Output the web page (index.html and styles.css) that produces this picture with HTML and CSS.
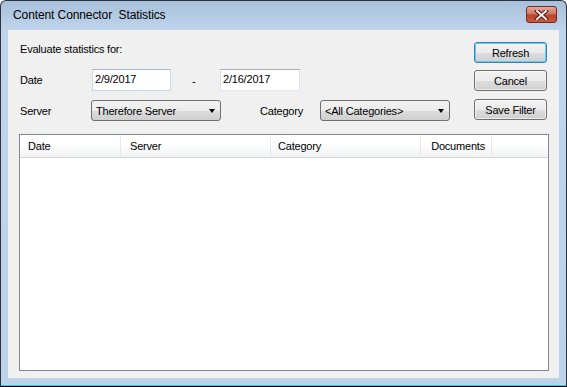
FILE: index.html
```html
<!DOCTYPE html>
<html lang="en">
<head>
    <meta charset="UTF-8">
    <title>Content Connector Statistics</title>
    <link rel="stylesheet" href="styles.css">
</head>
<body>
    <div class="window">
        <!-- Title Bar -->
        <div class="title-bar">
            <span class="title">Content Connector&nbsp; Statistics</span>
            <div class="close-btn">
                <svg width="15" height="10" viewBox="0 0 15 10">
                    <path d="M3 1 L12 9 M12 1 L3 9" stroke="#5a1a14" stroke-width="4" stroke-linecap="square"/>
                    <path d="M3 1 L12 9 M12 1 L3 9" stroke="#f4f4f4" stroke-width="2" stroke-linecap="square"/>
                </svg>
            </div>
        </div>

        <!-- Client Area -->
        <div class="client">
            <div class="top">
                <div class="filters">
                    <div class="row intro">Evaluate statistics for:</div>
                    <div class="row date-row">
                        <span class="label date-label">Date</span>
                        <div class="textbox hot">2/9/2017</div>
                        <span class="dash">-</span>
                        <div class="textbox wide">2/16/2017</div>
                    </div>
                    <div class="row server-row">
                        <span class="label server-label">Server</span>
                        <div class="combo">Therefore Server<span class="arrow"></span></div>
                        <span class="label category-label">Category</span>
                        <div class="combo">&lt;All Categories&gt;<span class="arrow"></span></div>
                    </div>
                </div>
                <div class="actions">
                    <div class="button default">Refresh</div>
                    <div class="button">Cancel</div>
                    <div class="button save">Save Filter</div>
                </div>
            </div>

            <!-- List View -->
            <div class="list">
                <div class="list-header">
                    <div class="col col-date">Date</div>
                    <div class="col col-server">Server</div>
                    <div class="col col-category">Category</div>
                    <div class="col col-docs">Documents</div>
                    <div class="col col-fill"></div>
                </div>
            </div>
        </div>
    </div>
</body>
</html>
```

FILE: styles.css
```css
body {
    margin: 0;
    padding: 0;
    font-family: "Liberation Sans", Arial, sans-serif;
    font-size: 11px;
    color: #000;
    background-color: #fff;
}
.window {
    width: 567px;
    height: 387px;
    box-sizing: border-box;
    border: 1px solid #2b3440;
    border-bottom-color: #000;
    border-radius: 6px 6px 0 0;
    background: linear-gradient(#a8c0da 0, #bfd5ec 30px, #bcd3ea 100%);
    box-shadow: inset 0 -1px 0 #3fc6e8;
    padding: 0 7px 8px 7px;
    display: flex;
    flex-direction: column;
    overflow: hidden;
}
.title-bar {
    height: 29px;
    display: flex;
    align-items: center;
    justify-content: space-between;
}
.title {
    font-size: 12px;
    letter-spacing: -0.1px;
    padding-left: 5px;
    padding-bottom: 2px;
    color: #000;
}
.close-btn {
    width: 29px;
    height: 15px;
    margin-right: 2px;
    margin-top: -2px;
    border: 1px solid #6c2a22;
    border-radius: 3px;
    background: linear-gradient(#e7a99c 0%, #d0745f 45%, #b8432c 55%, #c95a3f 100%);
    display: flex;
    justify-content: center;
    align-items: center;
}
.client {
    flex: 1;
    background-color: #f0f0f0;
    padding: 12px 10px 7px 11px;
    display: flex;
    flex-direction: column;
    letter-spacing: -0.2px;
}
.top {
    display: flex;
    padding: 0 2px 0 1px;
}
.filters {
    flex: 1;
}
.row {
    display: flex;
    align-items: center;
}
.intro {
    height: 13px;
}
.date-row {
    margin-top: 14px;
    height: 22px;
}
.server-row {
    margin-top: 9px;
    height: 21px;
}
.label {
    display: block;
}
.date-label {
    width: 72px;
}
.server-label {
    width: 71px;
}
.category-label {
    width: 60px;
    margin-left: 39px;
}
.textbox {
    width: 79px;
    height: 22px;
    box-sizing: border-box;
    background-color: #fff;
    border: 1px solid;
    border-color: #abadb3 #e2e3ea #e3e9ef #dbdfe6;
    padding: 3px 0 0 2px;
}
.textbox.hot {
    border-color: #a3b7cc #c5d9ec #c5d9ec #c5d9ec;
}
.textbox.wide {
    width: 80px;
}
.dash {
    width: 49px;
    box-sizing: border-box;
    padding: 1px 0 0 21px;
}
.combo {
    width: 130px;
    height: 21px;
    box-sizing: border-box;
    border: 1px solid #707070;
    border-radius: 3px;
    background: linear-gradient(#f2f2f2 0%, #ebebeb 50%, #dddddd 51%, #cfcfcf 100%);
    padding: 0 0 0 4px;
    display: flex;
    align-items: center;
    position: relative;
}
.arrow {
    position: absolute;
    right: 5px;
    top: 8px;
    width: 0;
    height: 0;
    border-left: 3.5px solid transparent;
    border-right: 3.5px solid transparent;
    border-top: 4px solid #000;
}
.actions {
    display: flex;
    flex-direction: column;
    gap: 7px;
}
.button {
    width: 73px;
    height: 21px;
    box-sizing: border-box;
    border: 1px solid #707070;
    border-radius: 3px;
    background: linear-gradient(#f2f2f2 0%, #ebebeb 50%, #dddddd 51%, #cfcfcf 100%);
    display: flex;
    justify-content: center;
    align-items: center;
    box-shadow: inset 0 0 0 1px rgba(255, 255, 255, 0.6);
}
.button.default {
    border-color: #3c7fb1;
    box-shadow: inset 0 0 0 1px #62cef5;
}
.button.save {
    margin-top: 1px;
}
.list {
    margin-top: 13px;
    flex: 1;
    background-color: #fff;
    border: 1px solid #828790;
}
.list-header {
    display: flex;
    height: 23px;
    box-sizing: border-box;
    border-bottom: 1px solid #d5d5d5;
    background: linear-gradient(#ffffff 0%, #ffffff 40%, #f1f2f4 100%);
}
.col {
    height: 100%;
    box-sizing: border-box;
    border-right: 1px solid #e3e8ee;
    display: flex;
    align-items: center;
}
.col-date {
    width: 101px;
    padding-left: 8px;
}
.col-server {
    width: 150px;
    padding-left: 9px;
}
.col-category {
    width: 150px;
    padding-left: 7px;
}
.col-docs {
    width: 71px;
    justify-content: flex-end;
    padding-right: 6px;
}
.col-fill {
    flex: 1;
    border-right: none;
}
```
